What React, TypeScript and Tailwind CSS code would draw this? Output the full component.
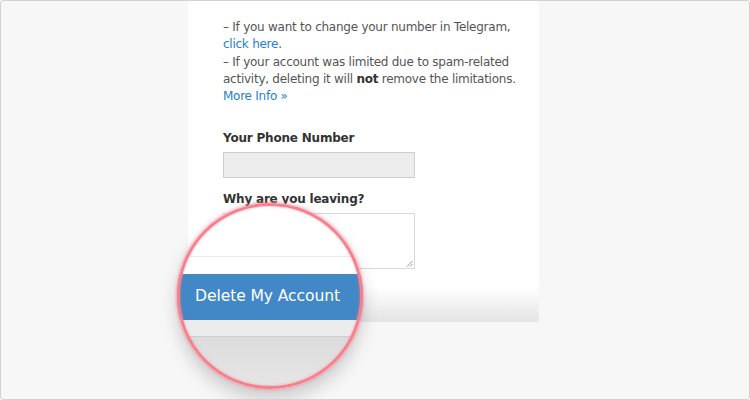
import React from "react";

const font = { fontFamily: '"DejaVu Sans", "Lucida Grande", sans-serif' };

function Magnifier() {
  // zoomed-in view of the submit button, lies over the form
  return (
    <div className="absolute left-[176px] top-[202px] h-[186px] w-[186px] rounded-full shadow-[0_10px_18px_rgba(0,0,0,0.18)]">
      <div className="relative h-full w-full overflow-hidden rounded-full bg-white">
        <div className="flex h-full flex-col">
          <div className="h-[54px] border-b border-[#ececec] bg-white" />
          <div className="h-[17px] bg-white" />
          <div className="flex h-[46px] items-center bg-[#4287c6] pl-[18px] text-[15.6px] tracking-[-0.1px] text-white">
            Delete My Account
          </div>
          <div className="h-[17px] border-b border-[#cdcdcd] bg-[#ececec]" />
          <div className="flex-1 bg-gradient-to-b from-[#dcdcdc] to-[#e6e6e6]" />
        </div>
      </div>
      <div className="pointer-events-none absolute inset-0 rounded-full border-[3px] border-[#f7808f] shadow-[0_0_3px_1px_rgba(247,128,143,0.6),inset_0_0_3px_rgba(247,128,143,0.6)]" />
    </div>
  );
}

export default function App() {
  return (
    <div
      className="relative h-[400px] w-[750px] overflow-hidden rounded-[3px] border border-[#d2d2d2] bg-[#f7f7f7]"
      style={font}
    >
      <div className="ml-[187px] flex h-[321px] w-[351px] flex-col rounded-b-[3px] bg-gradient-to-b from-white from-[89%] to-[#e4e4e4] pl-[35px] pt-[18px]">
        <div className="text-[12px] leading-[17.3px] tracking-[-0.25px] text-[#555]">
          <p>
            – If you want to change your number in Telegram,
            <br />
            <span className="text-[#2481cc]">click here</span>.
          </p>
          <p>
            – If your account was limited due to spam-related activity, deleting it will{" "}
            <b className="text-[#333]">not</b> remove the limitations.
            <br />
            <span className="text-[#2481cc]">More Info »</span>
          </p>
        </div>

        <label className="mt-[25px] text-[12px] font-bold leading-[17px] tracking-[-0.2px] text-[#333]">
          Your Phone Number
        </label>
        <div className="mt-[5px] h-[26px] w-[192px] border border-[#cfcfcf] bg-[#ededed]" />

        <label className="mt-[13px] text-[12px] font-bold leading-[17px] tracking-[-0.2px] text-[#333]">
          Why are you leaving?
        </label>
        <div className="relative mt-[5px] h-[56px] w-[192px] border border-[#d9d9d9] bg-white">
          <svg className="absolute bottom-[1px] right-[1px]" width="7" height="7" viewBox="0 0 7 7">
            <path d="M6.5 1 L1 6.5 M6.5 4 L4 6.5" stroke="#999" strokeWidth="1" />
          </svg>
        </div>
      </div>
      <Magnifier />
    </div>
  );
}
